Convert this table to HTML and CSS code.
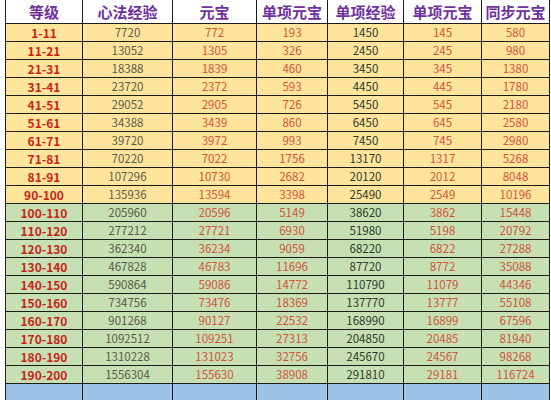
FILE: index.html
```html
<!DOCTYPE html>
<html lang="zh-CN">
<head>
<meta charset="utf-8">
<title>等级表</title>
<link rel="stylesheet" href="styles.css">
</head>
<body>
<div class="sheet">
  <div class="grid">
    <div class="h">等级</div><div class="h">心法经验</div><div class="h">元宝</div><div class="h">单项元宝</div><div class="h">单项经验</div><div class="h">单项元宝</div><div class="h">同步元宝</div>

    <div class="y lv">1-11</div><div class="y c2">7720</div><div class="y c3">772</div><div class="y c3">193</div><div class="y c5">1450</div><div class="y c3">145</div><div class="y c3">580</div>
    <div class="y lv">11-21</div><div class="y c2">13052</div><div class="y c3">1305</div><div class="y c3">326</div><div class="y c5">2450</div><div class="y c3">245</div><div class="y c3">980</div>
    <div class="y lv">21-31</div><div class="y c2">18388</div><div class="y c3">1839</div><div class="y c3">460</div><div class="y c5">3450</div><div class="y c3">345</div><div class="y c3">1380</div>
    <div class="y lv">31-41</div><div class="y c2">23720</div><div class="y c3">2372</div><div class="y c3">593</div><div class="y c5">4450</div><div class="y c3">445</div><div class="y c3">1780</div>
    <div class="y lv">41-51</div><div class="y c2">29052</div><div class="y c3">2905</div><div class="y c3">726</div><div class="y c5">5450</div><div class="y c3">545</div><div class="y c3">2180</div>
    <div class="y lv">51-61</div><div class="y c2">34388</div><div class="y c3">3439</div><div class="y c3">860</div><div class="y c5">6450</div><div class="y c3">645</div><div class="y c3">2580</div>
    <div class="y lv">61-71</div><div class="y c2">39720</div><div class="y c3">3972</div><div class="y c3">993</div><div class="y c5">7450</div><div class="y c3">745</div><div class="y c3">2980</div>
    <div class="y lv">71-81</div><div class="y c2">70220</div><div class="y c3">7022</div><div class="y c3">1756</div><div class="y c5">13170</div><div class="y c3">1317</div><div class="y c3">5268</div>
    <div class="y lv">81-91</div><div class="y c2">107296</div><div class="y c3">10730</div><div class="y c3">2682</div><div class="y c5">20120</div><div class="y c3">2012</div><div class="y c3">8048</div>
    <div class="y lv">90-100</div><div class="y c2">135936</div><div class="y c3">13594</div><div class="y c3">3398</div><div class="y c5">25490</div><div class="y c3">2549</div><div class="y c3">10196</div>

    <div class="g lv">100-110</div><div class="g c2">205960</div><div class="g c3">20596</div><div class="g c3">5149</div><div class="g c5">38620</div><div class="g c3">3862</div><div class="g c3">15448</div>
    <div class="g lv">110-120</div><div class="g c2">277212</div><div class="g c3">27721</div><div class="g c3">6930</div><div class="g c5">51980</div><div class="g c3">5198</div><div class="g c3">20792</div>
    <div class="g lv">120-130</div><div class="g c2">362340</div><div class="g c3">36234</div><div class="g c3">9059</div><div class="g c5">68220</div><div class="g c3">6822</div><div class="g c3">27288</div>
    <div class="g lv">130-140</div><div class="g c2">467828</div><div class="g c3">46783</div><div class="g c3">11696</div><div class="g c5">87720</div><div class="g c3">8772</div><div class="g c3">35088</div>
    <div class="g lv">140-150</div><div class="g c2">590864</div><div class="g c3">59086</div><div class="g c3">14772</div><div class="g c5">110790</div><div class="g c3">11079</div><div class="g c3">44346</div>
    <div class="g lv">150-160</div><div class="g c2">734756</div><div class="g c3">73476</div><div class="g c3">18369</div><div class="g c5">137770</div><div class="g c3">13777</div><div class="g c3">55108</div>
    <div class="g lv">160-170</div><div class="g c2">901268</div><div class="g c3">90127</div><div class="g c3">22532</div><div class="g c5">168990</div><div class="g c3">16899</div><div class="g c3">67596</div>
    <div class="g lv">170-180</div><div class="g c2">1092512</div><div class="g c3">109251</div><div class="g c3">27313</div><div class="g c5">204850</div><div class="g c3">20485</div><div class="g c3">81940</div>
    <div class="g lv">180-190</div><div class="g c2">1310228</div><div class="g c3">131023</div><div class="g c3">32756</div><div class="g c5">245670</div><div class="g c3">24567</div><div class="g c3">98268</div>
    <div class="g lv">190-200</div><div class="g c2">1556304</div><div class="g c3">155630</div><div class="g c3">38908</div><div class="g c5">291810</div><div class="g c3">29181</div><div class="g c3">116724</div>

    <div class="b"></div><div class="b"></div><div class="b"></div><div class="b"></div><div class="b"></div><div class="b"></div><div class="b"></div>
  </div>
</div>
</body>
</html>
```

FILE: styles.css
```css
html, body {
  margin: 0;
  padding: 0;
  background: #ffffff;
  overflow: hidden;
}

.sheet {
  width: 551px;
  height: 400px;
  padding-left: 5px;
  box-sizing: border-box;
}

.grid {
  display: grid;
  width: 545px;
  grid-template-columns: 76px 89px 83px 70px 75px 77px 67px;
  grid-template-rows: 23px repeat(20, 17px) 17px;
  gap: 1px;
  padding: 0 1px;
  box-sizing: border-box;
  background: #1c1c1c;
  font-family: "Noto Sans CJK SC", "Noto Sans", sans-serif;
}

.grid > div {
  display: flex;
  align-items: center;
  justify-content: center;
  font-size: 11.5px;
  line-height: 1;
  white-space: nowrap;
}

.grid > .h {
  background: #ffffff;
  color: #7030a0;
  font-size: 15px;
  font-weight: 700;
}

.y { background: #ffe49c; }
.g { background: #c6e0b4; }
.b { background: #9dc3e6; }

.grid > .lv {
  color: #cc1f1a;
  font-weight: 700;
  font-size: 12px;
}

.c2 { color: #5c5a48; }
.c3 { color: #d4533a; }
.c5 { color: #2e3a2a; }
```
